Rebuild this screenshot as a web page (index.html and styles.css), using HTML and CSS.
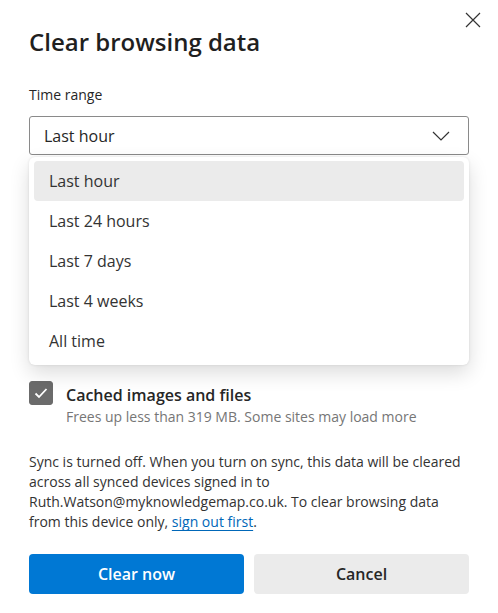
FILE: index.html
```html
<!DOCTYPE html>
<html>
  <head>
    <link rel="stylesheet" href="styles.css">
  </head>
  <body>
    <div class="dialog">
      <button class="close" aria-label="Close">
        <svg width="16" height="16" viewBox="0 0 16 16"><path d="M1 1 L15 15 M15 1 L1 15" stroke="#333" stroke-width="1.2" fill="none"/></svg>
      </button>
      <h1 class="title">Clear browsing data</h1>

      <div class="field-label">Time range</div>
      <div class="select-wrap">
        <div class="select">
          <span>Last hour</span>
          <svg class="chevron" width="18" height="10" viewBox="0 0 18 10"><path d="M1 1 L9 9 L17 1" stroke="#333" stroke-width="1.2" fill="none"/></svg>
        </div>
        <ul class="dropdown">
          <li class="active">Last hour</li>
          <li>Last 24 hours</li>
          <li>Last 7 days</li>
          <li>Last 4 weeks</li>
          <li>All time</li>
        </ul>
      </div>

      <!-- the other data types sit under the open dropdown -->
      <div class="options">
        <div class="option">
          <div class="box checked">
            <svg width="16" height="16" viewBox="0 0 16 16"><path d="M2.5 8.5 L6 12 L13.5 4" stroke="#fff" stroke-width="1.8" fill="none"/></svg>
          </div>
          <div class="opt-text">
            <div class="opt-title">Cached images and files</div>
            <div class="opt-sub">Frees up less than 319 MB. Some sites may load more</div>
          </div>
        </div>
      </div>

      <p class="sync">Sync is turned off. When you turn on sync, this data will be cleared across all synced devices signed in to Ruth.Watson@myknowledgemap.co.uk. To clear browsing data from this device only, <a href="#">sign out first</a>.</p>

      <div class="actions">
        <button class="btn primary">Clear now</button>
        <button class="btn">Cancel</button>
      </div>
    </div>
  </body>
</html>
```

FILE: styles.css
```css
body {
    margin: 0;
    background: #fff;
    font-family: "Open Sans", "Noto Sans", sans-serif;
    color: #262626;
}

.dialog {
    position: relative;
    width: 440px;
    padding: 26px 29px 0;
}

.close {
    position: absolute;
    top: 12px;
    right: 16px;
    width: 18px;
    height: 18px;
    padding: 0;
    border: none;
    background: none;
}

.title {
    margin: 0;
    font-size: 24px;
    line-height: 32px;
    font-weight: 600;
    color: #1f1f1f;
}

.field-label {
    margin-top: 27px;
    font-size: 14px;
    line-height: 20px;
}

.select-wrap {
    position: relative;
    margin-top: 11px;
}

.select {
    height: 37px;
    border: 1px solid #8a8a8a;
    border-radius: 3px;
    display: flex;
    align-items: center;
    justify-content: space-between;
    padding: 0 18px 0 14px;
    font-size: 16px;
}

.dropdown {
    position: absolute;
    top: 41px;
    left: 0;
    right: 0;
    margin: 0;
    padding: 4px 5px;
    list-style: none;
    background: #fff;
    border-radius: 6px;
    box-shadow: 0 8px 20px rgba(0, 0, 0, 0.14), 0 0 3px rgba(0, 0, 0, 0.1);
    z-index: 2;
}

.dropdown li {
    height: 40px;
    line-height: 41px;
    padding-left: 15px;
    font-size: 16px;
    border-radius: 4px;
    color: #333;
}

.dropdown li.active {
    background: #ebebeb;
}

.options {
    margin-top: 226px;
}

.option {
    display: flex;
    gap: 13px;
}

.box {
    width: 24px;
    height: 24px;
    flex: none;
    border-radius: 3px;
    border: 1px solid #8a8a8a;
    box-sizing: border-box;
    display: flex;
    align-items: center;
    justify-content: center;
}

.box.checked {
    background: #6b6b6b;
    border-color: #6b6b6b;
}

.opt-text {
    padding-top: 2px;
}

.opt-title {
    font-size: 16px;
    line-height: 24px;
    font-weight: 600;
}

.opt-sub {
    font-size: 14px;
    line-height: 20px;
    color: #767676;
}

.sync {
    margin: 25px 0 0;
    font-size: 14px;
    line-height: 20px;
    color: #333;
}

.sync a {
    color: #0067b8;
    text-decoration: underline;
    text-decoration-thickness: 1px;
    text-underline-offset: 3px;
}

.actions {
    margin-top: 22px;
    display: flex;
    gap: 10px;
}

.btn {
    flex: 1;
    height: 40px;
    border: none;
    border-radius: 4px;
    background: #ebebeb;
    font-family: inherit;
    font-size: 16px;
    font-weight: 600;
    color: #262626;
}

.btn.primary {
    background: #0078d4;
    color: #fff;
}
```
